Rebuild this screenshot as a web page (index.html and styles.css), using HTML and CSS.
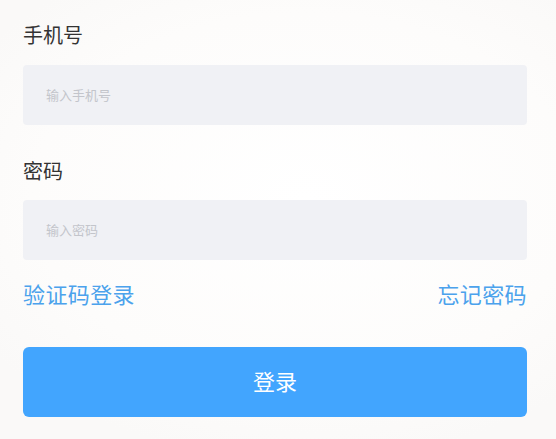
FILE: index.html
```html
<!DOCTYPE html>
<html lang="zh-CN">
<head>
<meta charset="utf-8">
<title>登录</title>
<link rel="stylesheet" href="styles.css">
</head>
<body>
<main class="login">
  <div class="field">
    <label class="label" for="phone">手机号</label>
    <input class="input" id="phone" type="text" placeholder="输入手机号">
  </div>
  <div class="field field-second">
    <label class="label" for="pwd">密码</label>
    <input class="input input-second" id="pwd" type="password" placeholder="输入密码">
  </div>
  <div class="links">
    <a class="link" href="#">验证码登录</a>
    <a class="link" href="#">忘记密码</a>
  </div>
  <button class="btn" type="button">登录</button>
</main>
</body>
</html>
```
FILE: styles.css
```css
html, body {
  margin: 0;
  padding: 0;
}
body {
  background: radial-gradient(ellipse 70% 60% at 55% 45%, #ffffff 0%, #fdfcfb 70%, #faf9f8 100%);
  font-family: "Noto Sans CJK SC", "Noto Sans", sans-serif;
  width: 556px;
  height: 439px;
  overflow: hidden;
}
.login {
  display: flex;
  flex-direction: column;
  padding: 21px 29px 0 23px;
}
.field {
  display: flex;
  flex-direction: column;
}
.field-second {
  margin-top: 32px;
}
.label {
  font-size: 20px;
  line-height: 28px;
  color: #333333;
}
.input {
  margin-top: 16px;
  height: 60px;
  box-sizing: border-box;
  border: none;
  outline: none;
  border-radius: 4px;
  background: #f0f1f5;
  padding: 0 23px 2px;
  font-family: "Noto Sans CJK SC", "Noto Sans", sans-serif;
  font-size: 13px;
  color: #333;
}
.input-second {
  margin-top: 15px;
}
.input::placeholder {
  color: #c3c5cb;
}
.links {
  margin-top: 18px;
  display: flex;
  justify-content: space-between;
}
.link {
  font-size: 22px;
  line-height: 30px;
  letter-spacing: 0.4px;
  color: #4ba2ec;
  text-decoration: none;
}
.btn {
  margin-top: 39px;
  height: 70px;
  border: none;
  border-radius: 6px;
  background: #42a5fe;
  color: #ffffff;
  font-family: "Noto Sans CJK SC", "Noto Sans", sans-serif;
  font-size: 22px;
  display: flex;
  align-items: center;
  justify-content: center;
  padding: 0 0 4px;
}
```
